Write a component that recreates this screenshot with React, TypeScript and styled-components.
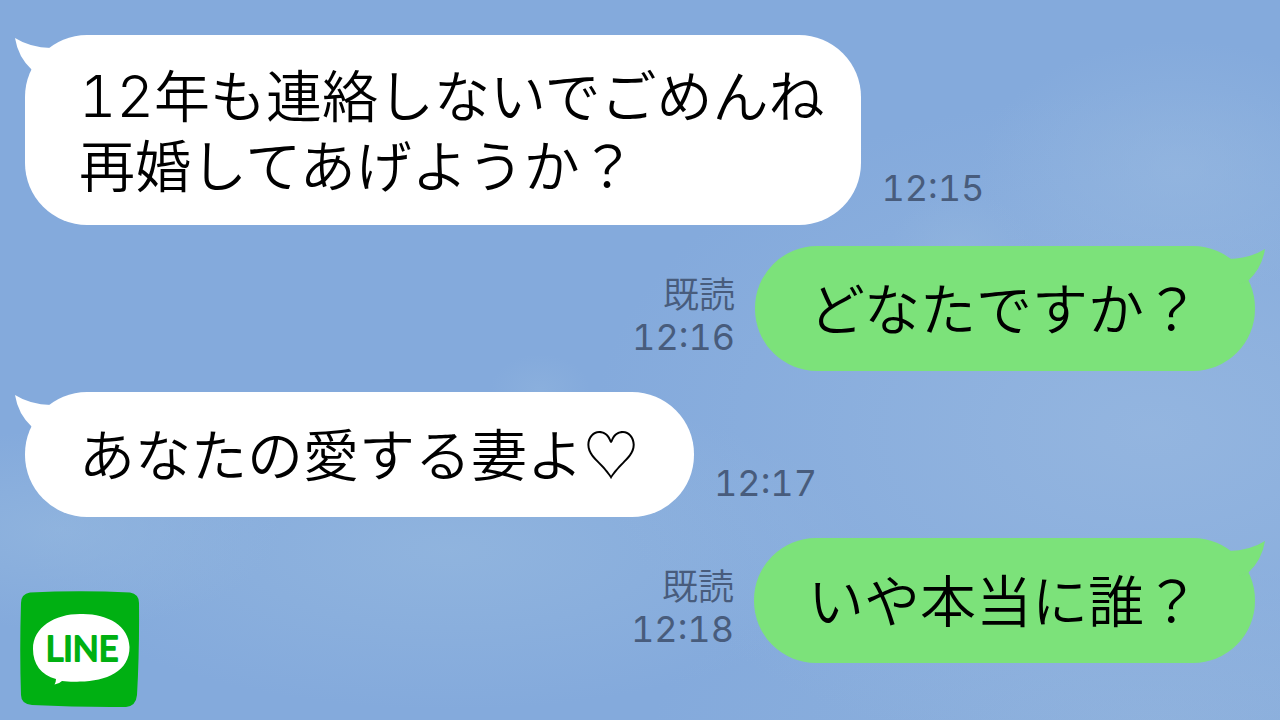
import React from "react";
import styled, { createGlobalStyle, css } from "styled-components";

const GlobalStyle = createGlobalStyle`
  *, *::before, *::after { box-sizing: border-box; }
  body { margin: 0; background: #84aadc; }
`;

type Side = "left" | "right";

const Chat = styled.main`
  display: flex;
  flex-direction: column;
  gap: 21px;
  min-height: 100vh;
  padding: 35px 25px 13px;
  overflow: hidden;
  font-family: "Noto Sans CJK JP", sans-serif;
  background:
    radial-gradient(ellipse 200px 130px at 92% 170px, rgba(152, 185, 224, 0.6), transparent),
    radial-gradient(ellipse 70px 60px at 75% 250px, rgba(148, 183, 222, 0.5), transparent),
    radial-gradient(ellipse 560px 340px at 90% 430px, rgba(150, 183, 224, 0.85), transparent),
    radial-gradient(ellipse 50px 36px at 540px 390px, rgba(148, 183, 222, 0.4), transparent),
    radial-gradient(ellipse 220px 100px at 60px 530px, rgba(150, 185, 223, 0.6), transparent),
    radial-gradient(ellipse 420px 160px at 450px 550px, rgba(150, 185, 223, 0.65), transparent),
    radial-gradient(ellipse 500px 160px at 90% 720px, rgba(148, 181, 221, 0.6), transparent),
    #84aadc;
`;

const Row = styled.article<{ $side: Side }>`
  display: flex;
  flex-direction: ${(p) => (p.$side === "left" ? "row" : "row-reverse")};
  align-items: flex-end;
  gap: 20px;
`;

const LastRow = styled.div`
  display: flex;
  justify-content: space-between;
  align-items: flex-start;
`;

const Bubble = styled.div<{ $side: Side; $long?: boolean }>`
  position: relative;
  min-height: 125px;
  padding: ${(p) => (p.$long ? "23px 37px 27px 54px" : "25px 55px 30px 54px")};
  border-radius: 62px;
  background: ${(p) => (p.$side === "left" ? "#ffffff" : "#7ce27a")};
  color: ${(p) => (p.$side === "left" ? "#ffffff" : "#7ce27a")};
`;

const Tail = styled.svg<{ $side: Side }>`
  position: absolute;
  top: 0;
  width: 50px;
  height: 40px;
  fill: currentColor;
  ${(p) =>
    p.$side === "left"
      ? css`left: -10px;`
      : css`right: -10px; transform: scaleX(-1);`}
`;

const Message = styled.p`
  margin: 0;
  color: #000;
  font-size: 56px;
  font-weight: 350;
  line-height: 70px;
  white-space: nowrap;
`;

const Digits = styled.span`
  font-family: Inter, sans-serif;
  font-size: 58px;
  font-weight: 300;
  font-variant-numeric: tabular-nums;
  line-height: 1;
`;

const Meta = styled.div<{ $side: Side; $long?: boolean }>`
  display: flex;
  flex-direction: column;
  align-items: ${(p) => (p.$side === "left" ? "flex-start" : "flex-end")};
  padding-bottom: ${(p) => (p.$long ? 16 : 13)}px;
  color: #485c7c;
  font-size: 36px;
  line-height: 42px;
  white-space: nowrap;
`;

const Read = styled.span`
  font-weight: 350;
  line-height: 48px;
`;

const Time = styled.time`
  font-family: Inter, sans-serif;
  font-variant-numeric: tabular-nums;
`;

const Logo = styled.svg`
  flex: none;
  width: 120px;
  height: 117px;
  margin: 53px 0 0 -5px;
`;

const LogoText = styled.text`
  font-family: Lato, sans-serif;
  font-size: 34px;
  font-weight: 400;
  text-anchor: middle;
  fill: #00b012;
  stroke: #00b012;
  stroke-width: 2;
  stroke-linejoin: round;
`;

interface ChatMessageProps {
  side: Side;
  time: string;
  read?: boolean;
  long?: boolean;
  children: React.ReactNode;
}

function ChatMessage({ side, time, read, long, children }: ChatMessageProps) {
  return (
    <Row $side={side}>
      <Bubble $side={side} $long={long}>
        <Tail $side={side} viewBox="0 0 50 40" aria-hidden="true">
          <path d="M0 3Q15 12.500 36 13L44 22L26 38L17 35Q3 22 0 3Z" />
        </Tail>
        <Message>{children}</Message>
      </Bubble>
      <Meta $side={side} $long={long}>
        {read && <Read>既読</Read>}
        <Time dateTime={time}>{time}</Time>
      </Meta>
    </Row>
  );
}

function LineLogo() {
  return (
    <Logo viewBox="0 0 120 117" role="img" aria-label="LINE">
      <path
        fill="#00b012"
        d="M10 1.500Q60 -1 110 1.500Q119 3 119 12Q119.500 60 117 104Q116 115 106 116Q60 116.500 12 114Q1 113 1 104Q-.5 60 1 12Q1 3 10 1.500Z"
      />
      <path
        fill="#fff"
        d="M60 23C86 22 109 34 109.500 56C110 80 86 90.500 60 90.500C53 91 47 90.500 42 90Q39 93 34.500 93.500Q36 91 36 88C21 84 13 73 13 58C13 36 35 23 60 23Z"
      />
      <LogoText x="62" y="70">
        LINE
      </LogoText>
    </Logo>
  );
}

export default function App() {
  return (
    <>
      <GlobalStyle />
      <Chat lang="ja">
        <ChatMessage side="left" time="12:15" long>
          <Digits>12</Digits>年も連絡しないでごめんね
          <br />
          再婚してあげようか？
        </ChatMessage>
        <ChatMessage side="right" time="12:16" read>
          どなたですか？
        </ChatMessage>
        <ChatMessage side="left" time="12:17">
          あなたの愛する妻よ♡
        </ChatMessage>
        <LastRow>
          <LineLogo />
          <ChatMessage side="right" time="12:18" read>
            いや本当に誰？
          </ChatMessage>
        </LastRow>
      </Chat>
    </>
  );
}
